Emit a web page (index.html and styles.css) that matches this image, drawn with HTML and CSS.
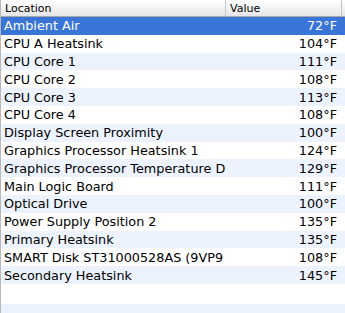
FILE: index.html
```html
<!DOCTYPE html>
<html>
<head>
<meta charset="utf-8">
<link rel="stylesheet" href="styles.css">
</head>
<body>
<div class="table">
  <div class="header">
    <div class="hcell hloc">Location</div>
    <div class="hcell hval">Value</div>
    <div class="hcell hend"></div>
  </div>
  <div class="rows">
    <div class="row sel"><div class="loc">Ambient Air</div><div class="val">72°F</div></div>
    <div class="row"><div class="loc">CPU A Heatsink</div><div class="val">104°F</div></div>
    <div class="row"><div class="loc">CPU Core 1</div><div class="val">111°F</div></div>
    <div class="row"><div class="loc">CPU Core 2</div><div class="val">108°F</div></div>
    <div class="row"><div class="loc">CPU Core 3</div><div class="val">113°F</div></div>
    <div class="row"><div class="loc">CPU Core 4</div><div class="val">108°F</div></div>
    <div class="row"><div class="loc">Display Screen Proximity</div><div class="val">100°F</div></div>
    <div class="row"><div class="loc">Graphics Processor Heatsink 1</div><div class="val">124°F</div></div>
    <div class="row"><div class="loc">Graphics Processor Temperature D</div><div class="val">129°F</div></div>
    <div class="row"><div class="loc">Main Logic Board</div><div class="val">111°F</div></div>
    <div class="row"><div class="loc">Optical Drive</div><div class="val">100°F</div></div>
    <div class="row"><div class="loc">Power Supply Position 2</div><div class="val">135°F</div></div>
    <div class="row"><div class="loc">Primary Heatsink</div><div class="val">135°F</div></div>
    <div class="row"><div class="loc">SMART Disk ST31000528AS (9VP9</div><div class="val">108°F</div></div>
    <div class="row"><div class="loc">Secondary Heatsink</div><div class="val">145°F</div></div>
    <div class="row filler"></div>
  </div>
</div>
</body>
</html>
```
FILE: styles.css
```css
html, body {
  margin: 0;
  padding: 0;
  background: #ffffff;
}
body {
  width: 345px;
  height: 313px;
  overflow: hidden;
  font-family: "DejaVu Sans", "Liberation Sans", sans-serif;
}
.table {
  height: 313px;
  border-left: 1px solid #b8b8b8;
  box-sizing: border-box;
  background: #edf3fe;
}
.header {
  display: grid;
  grid-template-columns: 225px 116px 3px;
  height: 16px;
  border-bottom: 1px solid #a8a8a8;
  background: linear-gradient(#ffffff, #f3f3f3 50%, #e6e6e6);
  font-size: 11px;
  color: #000;
}
.hcell {
  display: flex;
  align-items: center;
  box-sizing: border-box;
  border-right: 1px solid #c6c6c6;
  white-space: nowrap;
  overflow: hidden;
}
.hloc { padding-left: 4px; }
.hval { padding-left: 4px; }
.hend { border-right: none; }
.rows {
  display: flex;
  flex-direction: column;
}
.row {
  display: grid;
  grid-template-columns: 226px 110px;
  height: 17.8px;
  align-items: center;
  font-size: 12.8px;
  color: #000;
}
.row:nth-child(odd) { background: #edf3fe; }
.row:nth-child(even) { background: #ffffff; }
.row.sel {
  background: #3875d7;
  color: #ffffff;
}
.loc {
  padding-left: 3px;
  white-space: nowrap;
  overflow: hidden;
}
.val {
  text-align: right;
  white-space: nowrap;
}
.filler { height: 20px; }
```
